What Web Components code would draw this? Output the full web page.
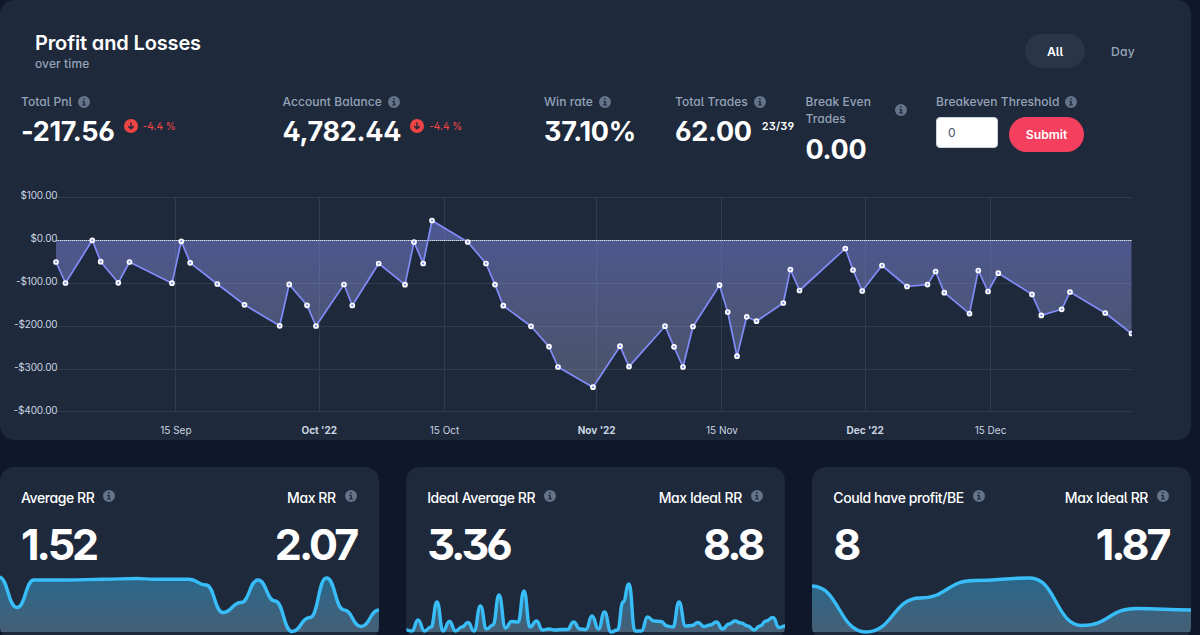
<!DOCTYPE html>
<html lang="en">
<head>
<meta charset="utf-8">
<title>Profit and Losses</title>
<style>
  body {
    margin: 0;
    background: #0f172a;
    font-family: Inter, "Liberation Sans", sans-serif;
    font-feature-settings: "cv02", "cv03", "cv04", "cv05", "cv09", "cv11";
    color: #fff;
    overflow: hidden;
  }
</style>
</head>
<body>
<trade-dashboard></trade-dashboard>

<script>
const define = (name, html, setup) => {
  const template = document.createElement('template');
  template.innerHTML = html;
  customElements.define(name, class extends HTMLElement {
    constructor() {
      super();
      this.attachShadow({ mode: 'open' });
      this.shadowRoot.appendChild(template.content.cloneNode(true));
    }
    connectedCallback() {
      if (setup) setup(this, this.shadowRoot);
    }
  });
};

define('info-icon', `
  <style>
    :host { display: block; flex: none; width: 12px; height: 12px; color: #64748b; }
    svg { display: block; }
  </style>
  <svg width="12" height="12" viewBox="0 0 20 20" fill="currentColor">
    <path fill-rule="evenodd" d="M20 10a10 10 0 11-20 0 10 10 0 0120 0zM11.3 5.2a1.5 1.5 0 11-3 0 1.5 1.5 0 013 0zM7.8 8.2a1 1 0 000 2h1v3.8H7.5a1 1 0 000 2h5a1 1 0 000-2h-1.2V9.2a1 1 0 00-1-1z"/>
  </svg>
`);

define('pnl-change', `
  <style>
    :host { display: flex; align-items: center; gap: 5px; height: 14px; font-size: 10px; font-weight: 500; color: #ef4444; letter-spacing: 0; white-space: nowrap; }
  </style>
  <svg width="14" height="14" viewBox="0 0 14 14">
    <circle cx="7" cy="7" r="7" fill="#ef4444"/>
    <path d="M7 4v5.6M4.6 7.4L7 9.8l2.4-2.4" fill="none" stroke="#1e293b" stroke-width="1.4" stroke-linecap="round" stroke-linejoin="round"/>
  </svg>
  <slot></slot>
`);

define('stat-item', `
  <style>
    :host { display: block; }
    .label { display: flex; align-items: center; gap: 6px; font-size: 12px; line-height: 17.4px; font-weight: 500; color: #94a3b8; letter-spacing: .06px; }
    .row { display: flex; align-items: flex-start; gap: 9px; margin-top: 4.7px; }
    .value { font-size: 27px; line-height: 34px; font-weight: 700; letter-spacing: -.3px; }
    :host([wrap]) .label { justify-content: space-between; padding-right: 29px; }
    :host([wrap]) .label span { width: 80px; }
    ::slotted(*) { margin-top: 4.3px; }
  </style>
  <div class="label"><span></span><info-icon></info-icon></div>
  <div class="row"><div class="value"></div><slot></slot></div>
`, (el, root) => {
  root.querySelector('.label span').textContent = el.getAttribute('label');
  root.querySelector('.value').textContent = el.getAttribute('value');
});

define('threshold-form', `
  <style>
    :host { display: block; }
    .label { display: flex; align-items: center; gap: 6px; font-size: 12px; line-height: 17.4px; font-weight: 500; color: #94a3b8; letter-spacing: .06px; }
    form { display: flex; align-items: flex-start; gap: 11px; margin-top: 6.6px; }
    input { box-sizing: border-box; width: 62px; height: 31px; padding: 0 11px; border: 1px solid #cbd5e1; border-radius: 4px; background: #fff; color: #475569; font: 12px Inter, sans-serif; }
    button { width: 75px; height: 35px; padding: 0; border: 0; border-radius: 18px; background: #f43f5e; color: #fff; font: 600 12.2px Inter, sans-serif; font-feature-settings: inherit; }
  </style>
  <div class="label"><span>Breakeven Threshold</span><info-icon></info-icon></div>
  <form><input value="0"><button type="button">Submit</button></form>
`);

// Points are [x, y] in chart pixels
const pnl = [
  [56,262],[65.5,283],[92.3,240.3],[100.7,261.7],[118.3,282.8],[129.5,262],[172,283.2],[181.3,241.3],[190.2,262.8],[217.3,284],[244.5,304.8],[279.7,325.8],
  [289.2,284.4],[307,305.3],[316,326],[344,284.5],[352.3,305.5],[378.7,263.5],[405,284.7],[414,242],[423.2,263.5],[432,220.5],[467.7,242],[486,263.5],[495,284.6],
  [503.3,305.7],[531,326.3],[549,346.6],[558,367],[593,387.2],[620,346.2],[629,366.6],[665,326.2],[674,346.8],[683,367],[693,326.5],[719.5,285.2],[727.7,312],
  [737,356.2],[746.7,316.8],[756.5,321.2],[783.3,303],[790.4,269.5],[799.5,290.5],[845.3,248.6],[853,270],[862.2,291],[882,265.5],[907,286.5],[927.5,284.6],
  [935.6,271.5],[944.3,292.7],[969.5,313.6],[978.3,270.5],[988,291.5],[998.3,273.2],[1032,294.4],[1041.3,315.4],[1061.7,309.3],[1070,292],[1105.2,313],[1131.5,333.5]
];

define('pnl-chart', `
  <style>
    :host { display: block; height: 260px; }
    svg { display: block; }
    .grid { stroke: #334155; stroke-opacity: .8; shape-rendering: crispEdges; }
    text { font-size: 10px; fill: #cbd5e1; font-feature-settings: normal; }
    .y { letter-spacing: -.15px; }
    .bold { font-weight: 700; }
  </style>
  <svg width="1191" height="260" viewBox="0 180 1191 260">
    <defs>
      <linearGradient id="fill" gradientUnits="userSpaceOnUse" x1="0" y1="220" x2="0" y2="388">
        <stop offset="0" stop-color="#818cf8" stop-opacity=".47"/>
        <stop offset="1" stop-color="#a5a9c8" stop-opacity=".32"/>
      </linearGradient>
      <clipPath id="plot"><rect x="50" y="190" width="1082" height="225"/></clipPath>
    </defs>
    <g class="grid"></g>
    <g class="labels"></g>
    <g class="series" clip-path="url(#plot)"></g>
  </svg>
`, (el, root) => {
  const rows = [['$100.00', 197.5, 199.4], ['$0.00', 240.5, 242], ['-$100.00', 283.5, 285.2], ['-$200.00', 326.5, 328], ['-$300.00', 369.5, 370.5], ['-$400.00', 411.5, 413.6]];
  const cols = [['15 Sep', 175.9], ["Oct '22", 319.3], ['15 Oct', 444.5], ["Nov '22", 596.7], ['15 Nov', 721.9], ["Dec '22", 865.2], ['15 Dec', 990.5]];
  let grid = '', labels = '';
  rows.forEach(([label, y, ty]) => {
    grid += `<line x1="56" x2="1132" y1="${y}" y2="${y}"/>`;
    labels += `<text class="y" x="57.5" y="${ty}" text-anchor="end">${label}</text>`;
  });
  cols.forEach(([label, x]) => {
    grid += `<line x1="${x}" x2="${x}" y1="197" y2="412"/>`;
    labels += `<text x="${x}" y="433.5" text-anchor="middle"${label.includes("'") ? ' class="bold"' : ''}>${label}</text>`;
  });
  const line = 'M' + pnl.map(p => p.join(' ')).join('L');
  root.querySelector('.grid').innerHTML = grid;
  root.querySelector('.labels').innerHTML = labels;
  root.querySelector('.series').innerHTML =
    `<path d="${line}V240.5H56Z" fill="url(#fill)"/>` +
    `<line x1="56" x2="1132" y1="240.5" y2="240.5" stroke="#e2e8f0" stroke-dasharray="1 1"/>` +
    `<line x1="56" x2="1132" y1="240.5" y2="240.5" stroke="#cbd5e1" stroke-opacity=".5"/>` +
    `<path d="${line}" fill="none" stroke="#818cf8" stroke-width="1.7" stroke-linejoin="round"/>` +
    pnl.map(([x, y]) => `<circle cx="${x}" cy="${y}" r="2" fill="#818cf8" stroke="#fff" stroke-width="1.7"/>`).join('');
});

define('pnl-panel', `
  <style>
    :host { display: block; box-sizing: border-box; width: 1191px; height: 440px; background: #1e293b; border-radius: 14px; overflow: hidden; }
    header { display: flex; justify-content: space-between; height: 93px; box-sizing: border-box; padding: 31px 41px 0 35px; }
    h1 { margin: 0; font-size: 20px; line-height: 24px; font-weight: 600; letter-spacing: -.14px; }
    p { margin: 0; font-size: 12px; line-height: 18px; font-weight: 500; color: #94a3b8; letter-spacing: .1px; }
    nav { display: flex; gap: 11px; margin-top: 3px; font-size: 12.2px; font-weight: 500; color: #94a3b8; }
    nav span { display: flex; align-items: center; justify-content: center; width: 54px; height: 34px; border-radius: 17px; letter-spacing: .2px; }
    nav .on { width: 60px; background: #293548; color: #fff; font-weight: 600; letter-spacing: 0; }
    .stats { display: grid; grid-template-columns: 261.5px 261.5px 131px 130.5px 130.5px 1fr; height: 87px; padding-left: 21px; }
    .ratio { font-size: 11px; line-height: 14px; font-weight: 600; letter-spacing: .2px; margin-left: 1px; }
  </style>
  <header>
    <div><h1>Profit and Losses</h1><p>over time</p></div>
    <nav><span class="on">All</span><span>Day</span></nav>
  </header>
  <div class="stats">
    <stat-item label="Total Pnl" value="-217.56"><pnl-change>-4.4 %</pnl-change></stat-item>
    <stat-item label="Account Balance" value="4,782.44"><pnl-change>-4.4 %</pnl-change></stat-item>
    <stat-item label="Win rate" value="37.10%"></stat-item>
    <stat-item label="Total Trades" value="62.00"><span class="ratio">23/39</span></stat-item>
    <stat-item wrap label="Break Even Trades" value="0.00"></stat-item>
    <threshold-form></threshold-form>
  </div>
  <pnl-chart></pnl-chart>
`);

// Points are relative to the card's left edge and to y = 560
const sparks = {
  average: [[-1,17],[17,47.5],[34,20],[68,20],[103,19.3],[137,18.5],[154,19.2],[189,19.2],[206,25],[223,52.5],[241,42.5],[258,20],[275,41],[292,71.5],[310,57.5],[326.5,18],[344,50],[361,66.5],[379,50]],
  ideal: [[0,70],[6,71],[12,60],[18.5,71],[25,67],[31,42],[37,71],[43.5,61.5],[49.5,71],[56,67],[62,62.5],[68,71],[74.5,46],[80.5,69],[87,65],[93,35],[99.5,68],[105.5,61.5],[112,62],[118,31],[124,67],[130.5,61],[136.5,70],[143,69],[149,70],[155,69.5],[161.5,69.5],[167.5,62],[174,69],[180,69.5],[186,56],[192.5,69],[198.5,52],[205,72],[211.5,70],[217,42],[223,24],[229,71],[235.5,71],[241.5,57],[248,61],[255,61.5],[261,66],[267,67],[273,42],[279.5,66],[286,65.5],[292,62.5],[298,66.5],[304,65],[310.5,62],[316.5,69],[323,64],[329,61],[335,63],[342,66],[348,70],[354,66],[360,61],[367,57.5],[373,67.5],[379,66]],
  profit: [[0,26],[54,72],[108,38],[162,20.5],[218,18],[270,65.5],[324,48.5],[379,50]]
};

define('spark-line', `
  <style>
    :host { display: block; height: 75px; }
    svg { display: block; }
  </style>
  <svg width="379" height="75" viewBox="0 560 379 75">
    <defs>
      <linearGradient id="fill" x1="0" y1="577" x2="0" y2="632" gradientUnits="userSpaceOnUse">
        <stop offset="0" stop-color="#38bdf8" stop-opacity=".42"/>
        <stop offset="1" stop-color="#7dabc8" stop-opacity=".42"/>
      </linearGradient>
    </defs>
    <path class="area" fill="url(#fill)"/>
    <path class="line" fill="none" stroke="#38bdf8" stroke-width="3.4"/>
  </svg>
`, (el, root) => {
  const points = sparks[el.getAttribute('series')];
  // Horizontal tangents at every vertex
  let d = `M${points[0][0]} ${points[0][1] + 560}`;
  for (let i = 1; i < points.length; i++) {
    const [x0, y0] = points[i - 1];
    const [x, y] = points[i];
    const mid = (x0 + x) / 2;
    d += `C${mid} ${y0 + 560} ${mid} ${y + 560} ${x} ${y + 560}`;
  }
  root.querySelector('.line').setAttribute('d', d);
  root.querySelector('.area').setAttribute('d', d + 'V632H0V577Z');
});

define('ratio-card', `
  <style>
    :host { display: flex; flex-direction: column; box-sizing: border-box; height: 174px; background: #1e293b; border-radius: 14px; overflow: hidden; }
    .top { display: flex; justify-content: space-between; flex: none; height: 92.6px; box-sizing: border-box; padding: 20px 20px 0 21px; }
    .label { display: flex; align-items: flex-start; gap: 9px; font-size: 14px; line-height: 21px; font-weight: 500; letter-spacing: -.42px; white-space: nowrap; }
    info-icon { margin-top: 2.6px; }
    .right .label { justify-content: flex-end; padding-right: 2px; }
    .value { margin-top: 12.6px; font-size: 43px; line-height: 46px; font-weight: 700; letter-spacing: -3px; }
    .right .value { text-align: right; padding-right: 2.5px; }
  </style>
  <div class="top">
    <div><div class="label"><span id="l1"></span><info-icon></info-icon></div><div class="value" id="v1"></div></div>
    <div class="right"><div class="label"><span id="l2"></span><info-icon></info-icon></div><div class="value" id="v2"></div></div>
  </div>
  <slot></slot>
`, (el, root) => {
  ['l1', 'v1', 'l2', 'v2'].forEach(id => {
    root.getElementById(id).textContent = el.getAttribute(id);
  });
});

define('trade-dashboard', `
  <style>
    :host { display: block; width: 1200px; height: 635px; overflow: hidden; }
    .cards { display: grid; grid-template-columns: repeat(3, 1fr); gap: 27.5px; width: 1191px; margin-top: 27.4px; }
  </style>
  <pnl-panel></pnl-panel>
  <div class="cards">
    <ratio-card l1="Average RR" v1="1.52" l2="Max RR" v2="2.07"><spark-line series="average"></spark-line></ratio-card>
    <ratio-card l1="Ideal Average RR" v1="3.36" l2="Max Ideal RR" v2="8.8"><spark-line series="ideal"></spark-line></ratio-card>
    <ratio-card l1="Could have profit/BE" v1="8" l2="Max Ideal RR" v2="1.87"><spark-line series="profit"></spark-line></ratio-card>
  </div>
`);
</script>
</body>
</html>
